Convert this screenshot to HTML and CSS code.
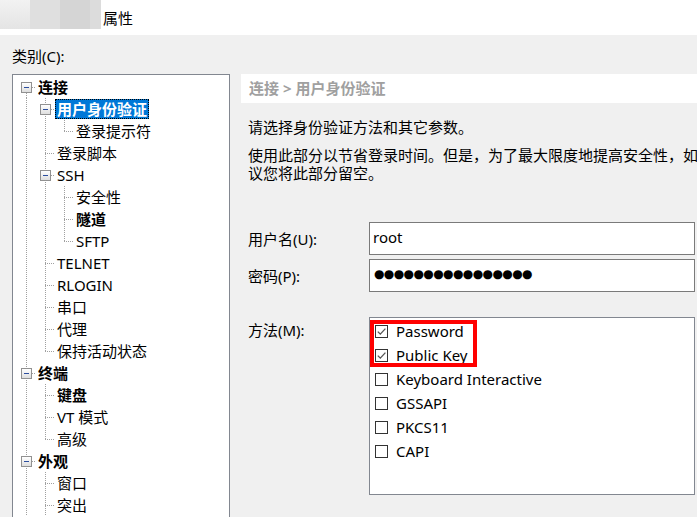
FILE: index.html
```html
<!DOCTYPE html>
<html lang="zh-CN">

<head>
    <meta charset="UTF-8">
    <title>属性</title>
    <link rel="stylesheet" href="styles.css">
</head>

<body>
    <div class="titlebar">
        <div class="blur">
            <span class="b1"></span><span class="b2"></span><span class="b3"></span><span class="b4"></span>
        </div>
        <span class="title">属性</span>
    </div>

    <div class="dialog">
        <div class="cat-label">类别(C):</div>

        <ul class="tree">
            <li><span class="cell r"><span class="box"></span></span><span class="label bold">连接</span></li>
            <li><span class="cell v"></span><span class="cell t"><span class="box"></span></span><span class="label bold sel">用户身份验证</span></li>
            <li><span class="cell v"></span><span class="cell v"></span><span class="cell l"></span><span class="label">登录提示符</span></li>
            <li><span class="cell v"></span><span class="cell t"></span><span class="label">登录脚本</span></li>
            <li><span class="cell v"></span><span class="cell t"><span class="box"></span></span><span class="label">SSH</span></li>
            <li><span class="cell v"></span><span class="cell v"></span><span class="cell t"></span><span class="label">安全性</span></li>
            <li><span class="cell v"></span><span class="cell v"></span><span class="cell t"></span><span class="label bold">隧道</span></li>
            <li><span class="cell v"></span><span class="cell v"></span><span class="cell l"></span><span class="label">SFTP</span></li>
            <li><span class="cell v"></span><span class="cell t"></span><span class="label">TELNET</span></li>
            <li><span class="cell v"></span><span class="cell t"></span><span class="label">RLOGIN</span></li>
            <li><span class="cell v"></span><span class="cell t"></span><span class="label">串口</span></li>
            <li><span class="cell v"></span><span class="cell t"></span><span class="label">代理</span></li>
            <li><span class="cell v"></span><span class="cell l"></span><span class="label">保持活动状态</span></li>
            <li><span class="cell t"><span class="box"></span></span><span class="label bold">终端</span></li>
            <li><span class="cell v"></span><span class="cell t"></span><span class="label bold">键盘</span></li>
            <li><span class="cell v"></span><span class="cell t"></span><span class="label">VT 模式</span></li>
            <li><span class="cell v"></span><span class="cell l"></span><span class="label">高级</span></li>
            <li><span class="cell t"><span class="box"></span></span><span class="label bold">外观</span></li>
            <li><span class="cell v"></span><span class="cell t"></span><span class="label">窗口</span></li>
            <li><span class="cell v"></span><span class="cell t"></span><span class="label">突出</span></li>
        </ul>

        <div class="panel">
            <div class="panel-head">连接 &gt; 用户身份验证</div>
            <p class="intro">请选择身份验证方法和其它参数。</p>
            <p class="note">使用此部分以节省登录时间。但是，为了最大限度地提高安全性，如果您担心安全问题，建<br>议您将此部分留空。</p>

            <div class="form">
                <label class="field-label">用户名(U):</label>
                <div class="input">root</div>

                <label class="field-label">密码(P):</label>
                <div class="input dots">●●●●●●●●●●●●●●●●</div>

                <label class="field-label top">方法(M):</label>
                <div class="methods">
                    <div class="item"><span class="check on"><svg width="11" height="11" viewBox="0 0 11 11"><path d="M1.8 5.6 L4.3 8.1 L9.4 2.6" /></svg></span>Password</div>
                    <div class="item"><span class="check on"><svg width="11" height="11" viewBox="0 0 11 11"><path d="M1.8 5.6 L4.3 8.1 L9.4 2.6" /></svg></span>Public Key</div>
                    <div class="item"><span class="check"></span>Keyboard Interactive</div>
                    <div class="item"><span class="check"></span>GSSAPI</div>
                    <div class="item"><span class="check"></span>PKCS11</div>
                    <div class="item"><span class="check"></span>CAPI</div>
                    <div class="highlight"></div>
                </div>
            </div>
        </div>
    </div>
</body>

</html>
```

FILE: styles.css
```css
body {
    margin: 0;
    width: 697px;
    height: 517px;
    overflow: hidden;
    background-color: #f0f0f0;
    font-family: "Noto Sans", "Noto Sans CJK SC", sans-serif;
    font-size: 15px;
    color: #000;
}

.titlebar {
    height: 35px;
    background-color: #fff;
    display: flex;
    align-items: flex-start;
}

.blur {
    display: flex;
    width: 101px;
    height: 29px;
}

.blur span {
    height: 100%;
}

.b1 {
    width: 30px;
    background: linear-gradient(#f2f2f2, #e4e4e4);
}

.b2 {
    width: 30px;
    background-color: #dfdfdf;
}

.b3 {
    width: 30px;
    background-color: #d5d5d5;
}

.b4 {
    width: 11px;
    background-color: #dcdcdc;
}

.title {
    margin-left: 2px;
    line-height: 36px;
}

.dialog {
    display: grid;
    grid-template-columns: 218px 456px;
    grid-template-rows: 39px auto;
    column-gap: 11px;
    padding-left: 12px;
}

.cat-label {
    grid-column: 1 / 3;
    padding-top: 11px;
    line-height: 20px;
}

/* tree */

.tree {
    list-style: none;
    margin: 0;
    padding: 1px 0 0 4px;
    height: 460px;
    background-color: #fff;
    border: 1px solid #828790;
}

.tree li {
    display: flex;
    align-items: center;
    height: 22px;
}

.cell {
    flex: none;
    width: 19px;
    height: 22px;
    display: flex;
    align-items: center;
    justify-content: center;
    background-repeat: no-repeat;
}

.v {
    background-image: repeating-linear-gradient(to bottom, #a0a0a0 0 1px, transparent 1px 2px);
    background-size: 1px 100%;
    background-position: 9px 0;
}

.t {
    background-image: repeating-linear-gradient(to bottom, #a0a0a0 0 1px, transparent 1px 2px),
        repeating-linear-gradient(to right, #a0a0a0 0 1px, transparent 1px 2px);
    background-size: 1px 100%, 10px 1px;
    background-position: 9px 0, 9px 11px;
}

.l {
    background-image: repeating-linear-gradient(to bottom, #a0a0a0 0 1px, transparent 1px 2px),
        repeating-linear-gradient(to right, #a0a0a0 0 1px, transparent 1px 2px);
    background-size: 1px 12px, 10px 1px;
    background-position: 9px 0, 9px 11px;
}

.r {
    background-image: repeating-linear-gradient(to bottom, #a0a0a0 0 1px, transparent 1px 2px),
        repeating-linear-gradient(to right, #a0a0a0 0 1px, transparent 1px 2px);
    background-size: 1px 11px, 10px 1px;
    background-position: 9px 11px, 9px 11px;
}

.box {
    width: 9px;
    height: 9px;
    border: 1px solid #919191;
    background: linear-gradient(#ffffff, #dedede);
    display: flex;
    align-items: center;
    justify-content: center;
}

.box::after {
    content: "";
    width: 5px;
    height: 1px;
    background-color: #2c4e9e;
}

.label {
    padding: 0 2px;
    line-height: 20px;
    white-space: nowrap;
}

.bold {
    font-weight: bold;
}

.sel {
    background-color: #0078d7;
    color: #fff;
    outline: 1px dotted #000;
    outline-offset: -1px;
}

/* right panel */

.panel {
    white-space: nowrap;
}

.panel-head {
    height: 29px;
    line-height: 28px;
    padding-left: 8px;
    background-color: #fff;
    color: #a0a0a0;
    font-weight: bold;
}

.intro,
.note {
    margin: 0;
    padding-left: 7px;
    line-height: 18px;
}

.intro {
    margin-top: 15px;
}

.note {
    margin-top: 10px;
}

.form {
    display: grid;
    grid-template-columns: 121px 326px;
    row-gap: 4px;
    padding-left: 7px;
    margin-top: 40px;
}

.field-label {
    align-self: center;
}

.field-label.top {
    align-self: start;
    margin-top: 21px;
    padding-top: 1px;
    line-height: 24px;
}

.input {
    height: 31px;
    line-height: 28px;
    padding-left: 3px;
    background-color: #fff;
    border: 1px solid #7a7a7a;
}

.dots {
    font-family: "DejaVu Sans", sans-serif;
    font-size: 12px;
    letter-spacing: -0.6px;
    padding-left: 4px;
}

.methods {
    position: relative;
    margin-top: 21px;
    height: 170px;
    padding: 1px 0 5px 5px;
    background-color: #fff;
    border: 1px solid #828790;
}

.item {
    display: flex;
    align-items: center;
    height: 24px;
}

.check {
    box-sizing: border-box;
    width: 13px;
    height: 13px;
    margin-right: 8px;
    border: 1px solid #333;
    display: flex;
}

.check path {
    fill: none;
    stroke: #555;
    stroke-width: 1.3;
}

.highlight {
    position: absolute;
    left: 0;
    top: 2px;
    width: 107px;
    height: 47px;
    box-sizing: border-box;
    border: 4px solid #ff0000;
}
```
